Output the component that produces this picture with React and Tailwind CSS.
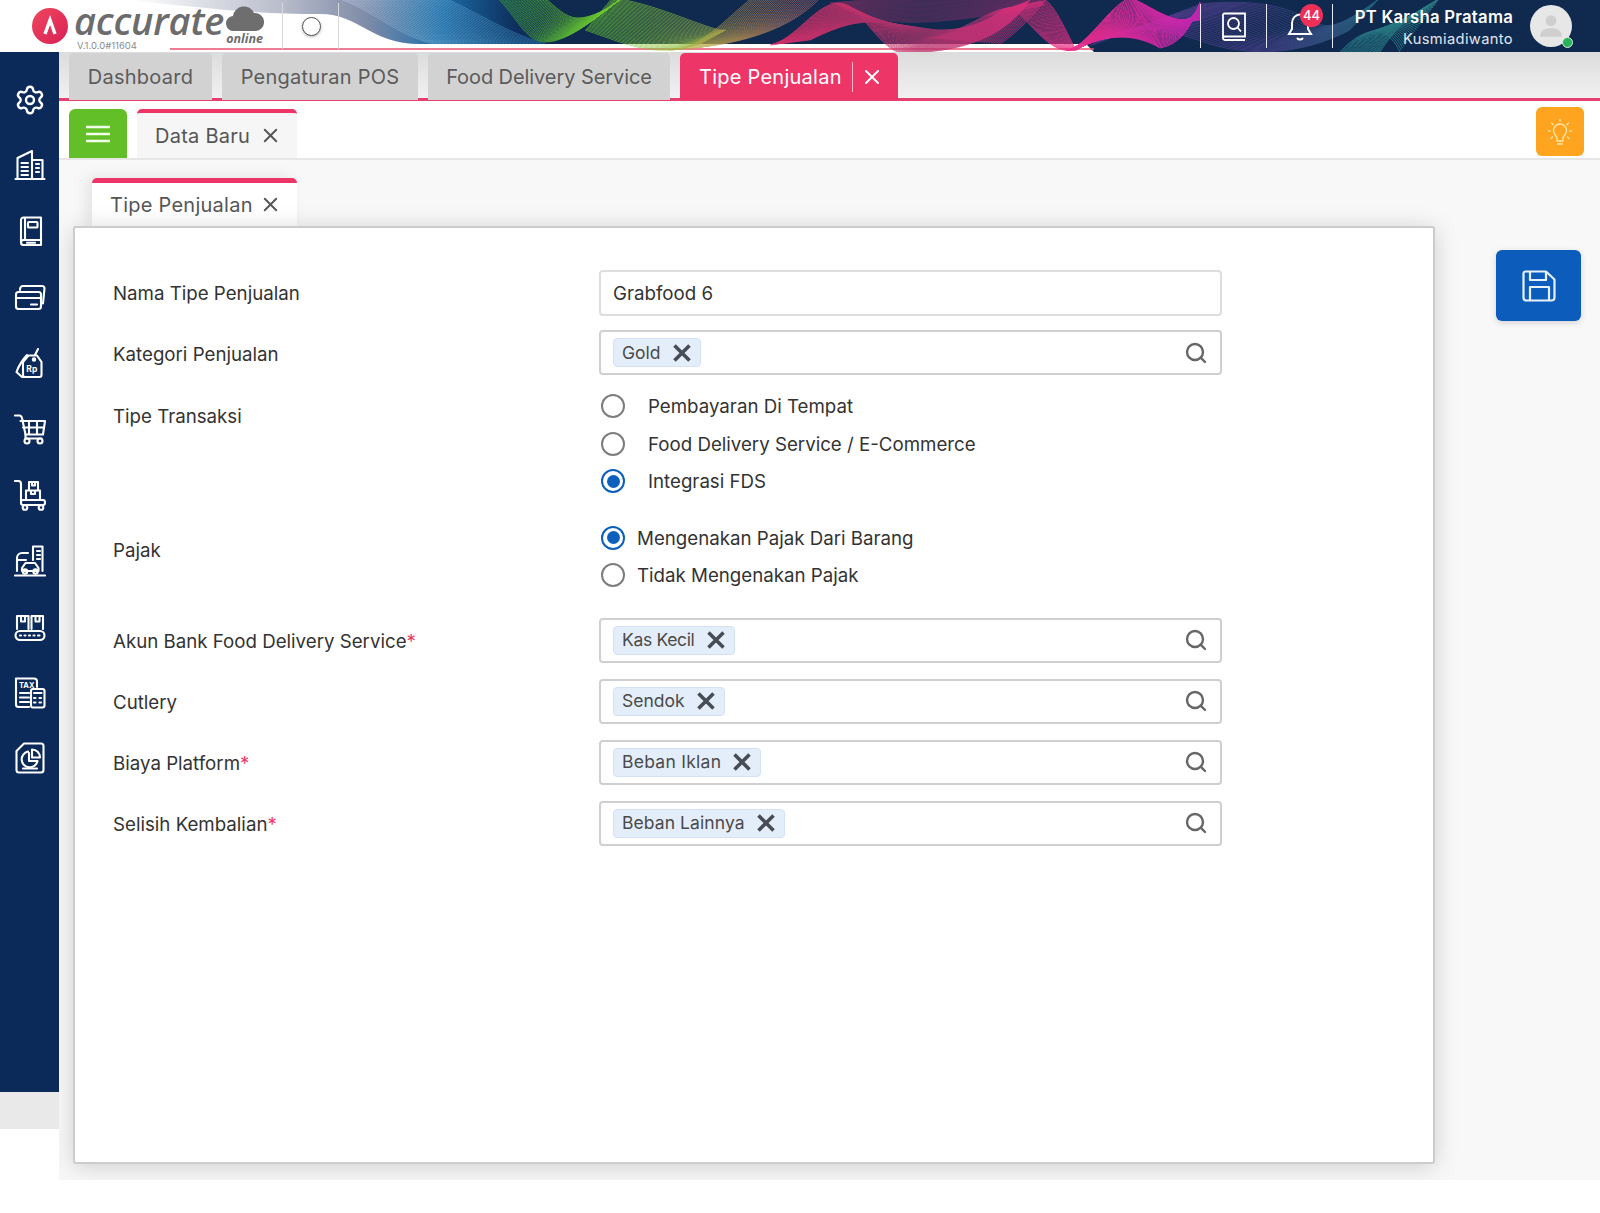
import React from "react";
import { Settings, Search, X } from "lucide-react";

const lerpPath = (a, b, t) => {
  const p = a.map((v, i) => v + (b[i] - v) * t);
  let d = `M${p[0].toFixed(1)} ${p[1].toFixed(1)}C`;
  d += p.slice(2).map((v) => v.toFixed(1)).join(" ");
  return d;
};

const ribbons = [
  { id: "rb", n: 34, o: 0.6, w: 0.8, a: [330, -4, 370, 6, 395, 36, 435, 44], b: [440, -4, 470, 8, 500, 30, 545, 44] },
  { id: "rg", n: 34, o: 0.9, w: 0.75, a: [497, -2, 515, 14, 525, 42, 545, 42, 570, 42, 600, 14, 622, -2], b: [545, -2, 555, 6, 565, 18, 578, 18, 592, 18, 610, 8, 622, -2] },
  { id: "rg", n: 34, o: 0.8, w: 0.75, a: [585, 30, 610, 38, 640, 52, 668, 50, 680, 49, 690, 46, 700, 44], b: [612, -2, 650, 2, 700, 26, 720, 30, 722, 30, 724, 30, 726, 30] },
  { id: "ro", n: 34, o: 0.75, w: 0.8, a: [668, 50, 700, 50, 722, 22, 752, -2], b: [690, 48, 740, 44, 790, 30, 820, -2] },
  { id: "rp", n: 30, o: 0.4, w: 0.8, a: [830, 3, 900, -4, 1000, -4, 1040, 0], b: [838, 4, 880, 34, 960, 22, 1045, 5] },
  { id: "rp", n: 44, o: 0.85, w: 0.85, a: [770, 45, 795, 40, 815, 4, 838, 3, 860, 2, 880, 54, 905, 53, 950, 52, 1000, 44, 1030, 0], b: [810, 40, 830, 30, 850, 22, 870, 22, 890, 22, 930, 30, 940, 30, 985, 30, 1000, 8, 1010, 8] },
  { id: "rp", n: 32, o: 0.8, w: 0.85, a: [930, 38, 960, 34, 990, 8, 1010, 8, 1020, 8, 1045, 50, 1066, 50], b: [1000, 44, 1020, 30, 1035, 14, 1045, 0, 1055, 4, 1070, 40, 1076, 50] },
  { id: "rv", n: 30, o: 0.55, w: 0.85, a: [1090, 46, 1130, 20, 1170, 30, 1210, 44, 1250, 56, 1300, 56, 1350, 30], b: [1200, 4, 1240, 0, 1280, 2, 1310, 20, 1330, 34, 1350, 20, 1380, -2] },
  { id: "rm", n: 50, o: 0.95, w: 1, a: [1066, 50, 1085, 50, 1110, 4, 1130, -2, 1150, 4, 1170, 26, 1200, 20], b: [1076, 50, 1110, 30, 1140, 36, 1160, 48, 1180, 44, 1190, 30, 1200, 2] },
  { id: "rt", n: 30, o: 0.65, w: 0.9, a: [1340, 52, 1360, 30, 1385, 20, 1400, 52, 1400, 52, 1400, 52, 1400, 52], b: [1380, 52, 1400, 20, 1420, 10, 1440, -2, 1440, -2, 1440, -2, 1440, -2] },
];

function HeaderArt() {
  return (
    <svg className="absolute inset-0 w-full h-full" viewBox="0 0 1600 52" preserveAspectRatio="none" aria-hidden="true">
      <defs>
        <linearGradient id="base" x1="130" x2="560" y1="0" y2="0" gradientUnits="userSpaceOnUse">
          <stop offset="0" stopColor="#ffffff" />
          <stop offset="0.35" stopColor="#b9bdcc" />
          <stop offset="0.55" stopColor="#7f8ba8" />
          <stop offset="0.72" stopColor="#1d6ea8" />
          <stop offset="0.9" stopColor="#0e2e5c" />
          <stop offset="1" stopColor="#0f2a4e" />
        </linearGradient>
        <linearGradient id="rb" x1="330" x2="540" y1="0" y2="0" gradientUnits="userSpaceOnUse"><stop offset="0" stopColor="#cfd6e6" /><stop offset="1" stopColor="#2a93d0" /></linearGradient>
        <linearGradient id="rg" x1="497" x2="720" y1="0" y2="0" gradientUnits="userSpaceOnUse"><stop offset="0" stopColor="#3d9a3a" /><stop offset="0.45" stopColor="#6fd02c" /><stop offset="1" stopColor="#a6b84a" /></linearGradient>
        <linearGradient id="ro" x1="660" x2="820" y1="0" y2="0" gradientUnits="userSpaceOnUse"><stop offset="0" stopColor="#9bbb3a" /><stop offset="0.5" stopColor="#c99a50" /><stop offset="1" stopColor="#c86a7a" /></linearGradient>
        <linearGradient id="rp" x1="770" x2="1080" y1="0" y2="0" gradientUnits="userSpaceOnUse"><stop offset="0" stopColor="#ef2f6c" /><stop offset="0.5" stopColor="#b9356f" /><stop offset="1" stopColor="#ef2c84" /></linearGradient>
        <linearGradient id="rm" x1="1066" x2="1200" y1="0" y2="0" gradientUnits="userSpaceOnUse"><stop offset="0" stopColor="#ee2c86" /><stop offset="1" stopColor="#c625b4" /></linearGradient>
        <linearGradient id="rv" x1="1100" x2="1380" y1="0" y2="0" gradientUnits="userSpaceOnUse"><stop offset="0" stopColor="#8e44c0" /><stop offset="0.6" stopColor="#6a4fae" /><stop offset="1" stopColor="#2f8ea0" /></linearGradient>
        <linearGradient id="rt" x1="1340" x2="1440" y1="0" y2="0" gradientUnits="userSpaceOnUse"><stop offset="0" stopColor="#2a8d96" /><stop offset="1" stopColor="#3fb6a8" /></linearGradient>
      </defs>
      <rect width="1600" height="52" fill="#ffffff" />
      <path d="M130 0H1600V52H1094L1086 44H420C370 44 360 14 320 14C260 14 220 10 130 0Z" fill="url(#base)" />
      <path d="M170 49H1094" stroke="#e9526f" strokeWidth="1.5" />
      {ribbons.map((r, k) => (
        <g key={k} fill="none" stroke={`url(#${r.id})`} strokeWidth={r.w} opacity={r.o}>
          {Array.from({ length: r.n }).map((_, i) => (
            <path key={i} d={lerpPath(r.a, r.b, i / (r.n - 1))} />
          ))}
        </g>
      ))}
    </svg>
  );
}

function Ic({ children, vb = "0 0 32 32", c = "w-8 h-8" }) {
  return (
    <svg viewBox={vb} className={c} fill="none" stroke="currentColor" strokeWidth="2.1" strokeLinecap="round" strokeLinejoin="round">
      {children}
    </svg>
  );
}

const NavIcons = [
  <Settings key="s" className="w-8 h-8" strokeWidth={1.8} />,
  <Ic key="b">
    <path d="M1.5 30H30.5M3.5 30V9L18 2V30M18 11H28.5V30" />
    <path d="M7.5 14H14M7.5 18H14M7.5 22H14M7.5 26H14M22 15H25M22 19H25M22 23H25" />
  </Ic>,
  <Ic key="k">
    <path d="M7 27V5a2.5 2.5 0 0 1 2.5-2.5H27V30H9.5A2.5 2.5 0 0 1 7 27.500a2.500 2.500 0 0 1 2.500-2.500H27M11 3V25" />
    <rect x="14" y="7" width="9.500" height="5.500" rx="0.800" />
    <path d="M13 27.800H21" />
  </Ic>,
  <Ic key="c">
    <rect x="2" y="11" width="25" height="17" rx="2.500" />
    <path d="M2 17H27M6 9V8a3 3 0 0 1 3-3H28a2.500 2.500 0 0 1 2.500 2.500L29 22.500M17 23.500H23" />
  </Ic>,
  <Ic key="t">
    <path d="M13 8C9 12 4 20 2.500 25L8 30M8 30H25.500A2 2 0 0 0 27.500 28V15L23 8.500H14.500L9 15V28A2 2 0 0 0 11 30M21 8L24 2" />
    <circle cx="20" cy="12.500" r="1.200" />
    <text x="12.300" y="24.500" fontSize="8.500" fontWeight="700" fill="currentColor" stroke="none" fontFamily="Inter, sans-serif">Rp</text>
  </Ic>,
  <Ic key="cart">
    <path d="M1 2.500H5.500C7 2.500 7.500 3.500 8 5L11.500 21.500H29M6.500 8H31L29 21.500M9 14.500H30M15 8V21.500M23 8V21.500" />
    <path d="M11.500 21.500V25.500H27.500" />
    <circle cx="13" cy="28" r="2.500" />
    <circle cx="26" cy="28" r="2.500" />
  </Ic>,
  <Ic key="tr">
    <path d="M1 2H4.500C6 2 7 3 7 5V22" />
    <rect x="7" y="21" width="24" height="5" rx="2" />
    <circle cx="11" cy="28.500" r="2.300" />
    <circle cx="27" cy="28.500" r="2.300" />
    <path d="M12 21V11.500H26V21M15 11.500V3H24V11.500M17 11.500V15H21V11.500M18 3V6.500H21V3" />
  </Ic>,
  <Ic key="f">
    <path d="M1 30.500H31M3 26V13a5 5 0 0 1 5-5H14M19 15V1.500H28.500V26M3 15H12M23 6H26M23 10H26M23 14H26" />
    <path d="M8 26V23L11.500 18H21L24.500 23V26M8 26H24.500" />
    <circle cx="11" cy="26.500" r="2.200" />
    <circle cx="21.500" cy="26.500" r="2.200" />
  </Ic>,
  <Ic key="v">
    <rect x="1.500" y="20" width="29" height="9" rx="4.500" />
    <path d="M3 18V5H14.500V18M17.500 18V5H29V18M7 5V10.500H11V5M21.500 5V10.500H25.500V5M6 24.500H7M10.500 24.500H11.500M15 24.500H16M19.500 24.500H20.500M24 24.500H25.500" />
  </Ic>,
  <Ic key="tax">
    <path d="M15 30H4.500A2.500 2.500 0 0 1 2 27.500V1.500H20A3 3 0 0 1 23 4.500V10" />
    <path d="M6 16H15M6 20.500H15M6 25H15" />
    <rect x="17" y="12" width="13.500" height="18.500" rx="2" />
    <path d="M20 16H27.500M20 21H21.500M25.500 21H27M20 25.500H21.500M25.500 25.500H27" />
    <text x="5" y="10.700" fontSize="7.500" fontWeight="700" fill="currentColor" stroke="none" fontFamily="Inter, sans-serif">TAX</text>
  </Ic>,
  <Ic key="r">
    <path d="M10 1.500H27A2.500 2.500 0 0 1 29.500 4V28A2.500 2.500 0 0 1 27 30.500H5A2.500 2.500 0 0 1 2.500 28V9Z" />
    <path d="M14 9.500A8 8 0 1 0 23.500 19H15V11" />
    <path d="M18 7.500A8 8 0 0 1 26 15.500H18Z" />
    <path d="M9 26.500H23" />
  </Ic>,
];

function TopTab({ label, w, active, tr = "tracking-[0.25px]" }) {
  return (
    <div
      className={`${w} h-[47px] rounded-t-[5px] flex items-center text-[20px] ${tr} ${
        active ? "bg-[#ee3567] text-white pl-[19px]" : "bg-[#d2d2d2] text-[#5b5b5b] justify-center"
      }`}
    >
      <span>{label}</span>
      {active && (
        <>
          <span className="ml-[10px] w-px h-[30px] bg-[#f8b4c8]" />
          <X className="ml-[7px] w-[24px] h-[24px]" strokeWidth={2} />
        </>
      )}
    </div>
  );
}

function Radio({ on }) {
  return (
    <span className={`w-[24px] h-[24px] shrink-0 rounded-full flex items-center justify-center border-[2.5px] bg-white ${on ? "border-[#0c5fbd]" : "border-[#7d7d7d]"}`}>
      {on && <span className="w-[13px] h-[13px] rounded-full bg-[#0c5fbd]" />}
    </span>
  );
}

function RadioRow({ label, on, gap }) {
  return (
    <div className={`h-[37.5px] flex items-center pl-[2px] ${gap} text-[18.7px] text-[#333333]`}>
      <Radio on={on} />
      <span className="pt-[2px]">{label}</span>
    </div>
  );
}

function TagInput({ tag, tr }) {
  return (
    <div className="w-[623px] h-[45px] rounded-[4px] border-2 border-[#cfcfcf] bg-white flex items-center pl-[12px] pr-[12px]">
      <div className="h-[29px] rounded-[4px] border border-[#d3e2f2] bg-[#e4eefa] flex items-center pl-[8px] pr-[9px] gap-[12px] text-[17.5px] text-[#4a4a4a]">
        <span className={`pt-[1px] ${tr}`}>{tag}</span>
        <svg viewBox="0 0 18 18" className="w-[18px] h-[18px] text-[#474c55]" stroke="currentColor" strokeWidth="3.6">
          <path d="M1.500 1.500L16.500 16.500M16.500 1.500L1.500 16.500" />
        </svg>
      </div>
      <Search className="ml-auto w-[24px] h-[24px] text-[#666666]" strokeWidth={2.4} />
    </div>
  );
}

function Label({ text, req, extra = "" }) {
  return (
    <div className={`w-[486px] shrink-0 text-[18.7px] text-[#333333] leading-[27px] ${extra}`}>
      {text}
      {req && <span className="text-[#ee3567]">*</span>}
    </div>
  );
}

function TagRow({ label, tag, req, mt, tr = "" }) {
  return (
    <div className={`flex items-center ${mt}`}>
      <Label text={label} req={req} extra="pt-[3px]" />
      <TagInput tag={tag} tr={tr} />
    </div>
  );
}

export default function App() {
  return (
    <div className="w-full h-[1213px] bg-white overflow-hidden flex flex-col font-['Inter',sans-serif]">
      <header className="relative h-[52px] shrink-0 flex items-stretch text-white">
        <HeaderArt />
        <div className="relative flex items-center w-full">
          <div className="ml-[32px] w-[36px] h-[36px] rounded-full bg-gradient-to-br from-[#f0455f] to-[#d81f55] flex items-center justify-center shrink-0">
            <svg viewBox="0 0 24 24" className="w-[24px] h-[24px]" fill="none" stroke="#fff" strokeWidth="3.400" strokeLinejoin="miter"><path d="M7 20L12 6L17 20" /></svg>
          </div>
          <div className="relative ml-[6px] w-[152px] h-[52px] shrink-0">
            <span className="absolute left-0 top-0 text-[38px] leading-[40px] italic font-semibold tracking-[-0.2px] whitespace-nowrap text-[#6c6c6c] font-['Open_Sans',sans-serif]">accurate</span>
            <span className="absolute left-[3px] top-[40px] text-[9.500px] leading-[11px] text-[#8b8b8b]">V.1.0.0#11604</span>
          </div>
          <div className="relative w-[39px] h-[52px] shrink-0">
            <svg viewBox="0 0 38 26" className="absolute left-0 top-[6px] w-[38px] h-[26px]" fill="#6e6e6e"><path d="M8 25a7.500 7.500 0 0 1-1-15 11 11 0 0 1 21-3 8.500 8.500 0 0 1 2 18Z" /></svg>
            <span className="absolute right-[2px] top-[32px] text-[12.5px] leading-[14px] italic font-bold text-[#6c6c6c] font-['Open_Sans',sans-serif]">online</span>
          </div>
          <span className="ml-[17px] w-px h-[46px] bg-[#d8d8d8]" />
          <span className="ml-[19px] w-[19px] h-[19px] rounded-full bg-white border-[1.5px] border-[#555] shadow-[0_1px_3px_rgba(0,0,0,.3)] shrink-0" />
          <span className="ml-[17px] w-px h-[46px] bg-[#d8d8d8]" />

          <span className="ml-auto w-px h-[44px] bg-[#e8e8f0]" />
          <div className="w-[65px] flex justify-center">
            <svg viewBox="0 0 26 30" className="w-[26px] h-[30px] mt-[1px]" fill="none" stroke="#fff" strokeWidth="1.800"><path d="M2 26V3a1.500 1.500 0 0 1 1.500-1.500H24V24.500H3.500A1.500 1.500 0 0 0 2 26a1.800 1.800 0 0 0 2 2H24" /><circle cx="12.500" cy="11.500" r="5.500" /><path d="M16.500 15.500L20 19.500" /></svg>
          </div>
          <span className="w-px h-[44px] bg-[#e8e8f0]" />
          <div className="relative w-[65px] h-[52px] flex items-center justify-center">
            <svg viewBox="0 0 26 30" className="w-[26px] h-[30px]" fill="none" stroke="#fff" strokeWidth="2" strokeLinecap="round"><path d="M2 23H24L21 18V12C21 7 17 3.500 13 3.500S5 7 5 12V18ZM10.500 27.500a3 2 0 0 0 5 0" /></svg>
            <span className="absolute left-[33px] top-[4px] w-[23px] h-[23px] rounded-full bg-[#ee3058] flex items-center justify-center text-[13px] font-medium">44</span>
          </div>
          <span className="w-px h-[44px] bg-[#e8e8f0]" />
          <div className="ml-[19px] w-[161px] flex flex-col items-end pt-[3px] whitespace-nowrap">
            <span className="text-[16.7px] leading-[22px] font-semibold tracking-[0.25px]">PT Karsha Pratama</span>
            <span className="text-[14.7px] leading-[22px] tracking-[0.35px] text-[#e2e6ee]">Kusmiadiwanto</span>
          </div>
          <div className="relative ml-[17px] mr-[28px] w-[42px] h-[42px] rounded-full bg-[#e7e7e7] flex items-center justify-center shrink-0">
            <svg viewBox="0 0 24 24" className="w-[26px] h-[26px]" fill="#cfcfcf"><circle cx="12" cy="7" r="5" /><path d="M2 22c0-6 4-8 10-8s10 2 10 8Z" /></svg>
            <span className="absolute right-[-1px] bottom-[-1px] w-[11px] h-[11px] rounded-full bg-[#27b35a] border border-[#dcefe2]" />
          </div>
        </div>
      </header>

      <div className="h-[1128px] shrink-0 flex">
        <aside className="w-[59px] shrink-0 flex flex-col">
          <nav className="h-[1040px] bg-[#0b2959] text-white flex flex-col items-center pt-[31.5px] gap-[33.9px]">
            {NavIcons}
          </nav>
          <div className="h-[37px] bg-[#e9e9e9]" />
        </aside>

        <main className="flex-1 min-w-0 bg-[#f8f8f8] overflow-hidden flex flex-col">
          <div className="h-[49px] shrink-0 pt-px border-b-[3px] border-[#e5406f] bg-gradient-to-b from-[#dcdcdc] to-[#f1f1f1] pl-[10px] flex items-start gap-[10px]">
            <TopTab label="Dashboard" w="w-[143px]" />
            <TopTab label="Pengaturan POS" w="w-[196px]" />
            <TopTab label="Food Delivery Service" w="w-[242px]" tr="tracking-[-0.08px]" />
            <TopTab label="Tipe Penjualan" w="w-[218px]" active />
          </div>

          <div className="h-[59px] shrink-0 bg-white border-b-2 border-[#e6e6e6] pl-[10px] pr-[16px] pt-[8px] flex items-start">
            <div className="w-[58px] h-[49px] bg-[#62bf28] rounded-t-[6px] flex items-center justify-center">
              <svg viewBox="0 0 24 18" className="w-[24px] h-[18px]" stroke="#f2ffe8" strokeWidth="2.500"><path d="M0 2H24M0 9H24M0 16H24" /></svg>
            </div>
            <div className="ml-[10px] w-[160px] h-[49px] bg-[#f6f6f6] border-t-[4px] border-[#ee3567] rounded-t-[5px] flex items-center pl-[18px] text-[20px] tracking-[0.25px] text-[#555]">
              <span>Data Baru</span>
              <X className="ml-auto mr-[15px] w-[23px] h-[23px]" strokeWidth={2} />
            </div>
            <div className="ml-auto mt-[-2px] w-[48px] h-[49px] bg-[#ffa41f] rounded-[6px] flex items-center justify-center">
              <svg viewBox="0 0 26 28" className="w-[26px] h-[28px]" fill="none" stroke="#ffe6a8" strokeWidth="1.400" strokeLinecap="round">
                <path d="M13 1.500V3M4.500 5L6 6.500M21.500 5L20 6.500M1.500 13H3M23 13H24.500M4 20.500L5.500 19M22 20.500L20.500 19" />
                <path d="M10 23V20C10 18 6.500 17 6.500 12.500A6.500 6.500 0 0 1 19.500 12.500C19.500 17 16 18 16 20V23M10 23H16M10.500 26H15.500" />
              </svg>
            </div>
          </div>

          <div className="flex-1 min-h-0 pl-[14px] pt-[18px] flex items-start">
            <div className="w-[1362px] shrink-0">
              <div className="ml-[19px] w-[205px] h-[48px] bg-white border-t-[5px] border-[#ee3567] rounded-t-[5px] flex items-center pl-[18px] text-[20px] tracking-[0.25px] text-[#555] shadow-[-6px_-2px_14px_rgba(0,0,0,.08)]">
                <span>Tipe Penjualan</span>
                <X className="ml-auto mr-[15px] w-[23px] h-[23px]" strokeWidth={2} />
              </div>
              <section className="h-[938px] bg-white border-2 border-[#cccccc] rounded-[3px] shadow-[0_3px_24px_rgba(0,0,0,.17)] pl-[38px] pt-[42px]">
                <div className="flex items-center">
                  <Label text="Nama Tipe Penjualan" extra="pt-[1px]" />
                  <div className="w-[623px] h-[46px] rounded-[4px] border-2 border-[#dddddd] flex items-center pl-[12px] text-[18.7px] text-[#333333]">
                    <span className="pt-[2px]">Grabfood 6</span>
                  </div>
                </div>
                <TagRow label="Kategori Penjualan" tag="Gold" mt="mt-[14px]" />
                <div className="flex items-start mt-[12.5px]">
                  <Label text="Tipe Transaksi" extra="pt-[15px]" />
                  <div className="flex flex-col">
                    <RadioRow label="Pembayaran Di Tempat" gap="gap-[23px]" />
                    <RadioRow label="Food Delivery Service / E-Commerce" gap="gap-[23px]" />
                    <RadioRow label="Integrasi FDS" on gap="gap-[23px]" />
                  </div>
                </div>
                <div className="flex items-start mt-[19px]">
                  <Label text="Pajak" extra="pt-[18px]" />
                  <div className="flex flex-col">
                    <RadioRow label="Mengenakan Pajak Dari Barang" on gap="gap-[12px]" />
                    <RadioRow label="Tidak Mengenakan Pajak" gap="gap-[12px]" />
                  </div>
                </div>
                <TagRow label="Akun Bank Food Delivery Service" tag="Kas Kecil" req mt="mt-[23.5px]" tr="tracking-[-0.33px]" />
                <TagRow label="Cutlery" tag="Sendok" mt="mt-[16px]" />
                <TagRow label="Biaya Platform" tag="Beban Iklan" req mt="mt-[16px]" tr="tracking-[0.27px]" />
                <TagRow label="Selisih Kembalian" tag="Beban Lainnya" req mt="mt-[16px]" tr="tracking-[0.08px]" />
              </section>
            </div>
            <button className="ml-[61px] mt-[72px] w-[85px] h-[71px] rounded-[6px] bg-[#0b5cbb] flex items-center justify-center shadow-[0_2px_6px_rgba(0,0,0,.15)]">
              <svg viewBox="0 0 34 32" className="w-[34px] h-[32px]" fill="none" stroke="#e8f1fb" strokeWidth="2.200" strokeLinejoin="round">
                <path d="M3.500 1.500H24L32.500 9.500V27.500A3 3 0 0 1 29.500 30.500H4.500A3 3 0 0 1 1.500 27.500V3.500A2 2 0 0 1 3.500 1.500Z" />
                <path d="M8 1.500V10H24V2M8 30.500V17H27V30.500" />
              </svg>
            </button>
          </div>
        </main>
      </div>
    </div>
  );
}
